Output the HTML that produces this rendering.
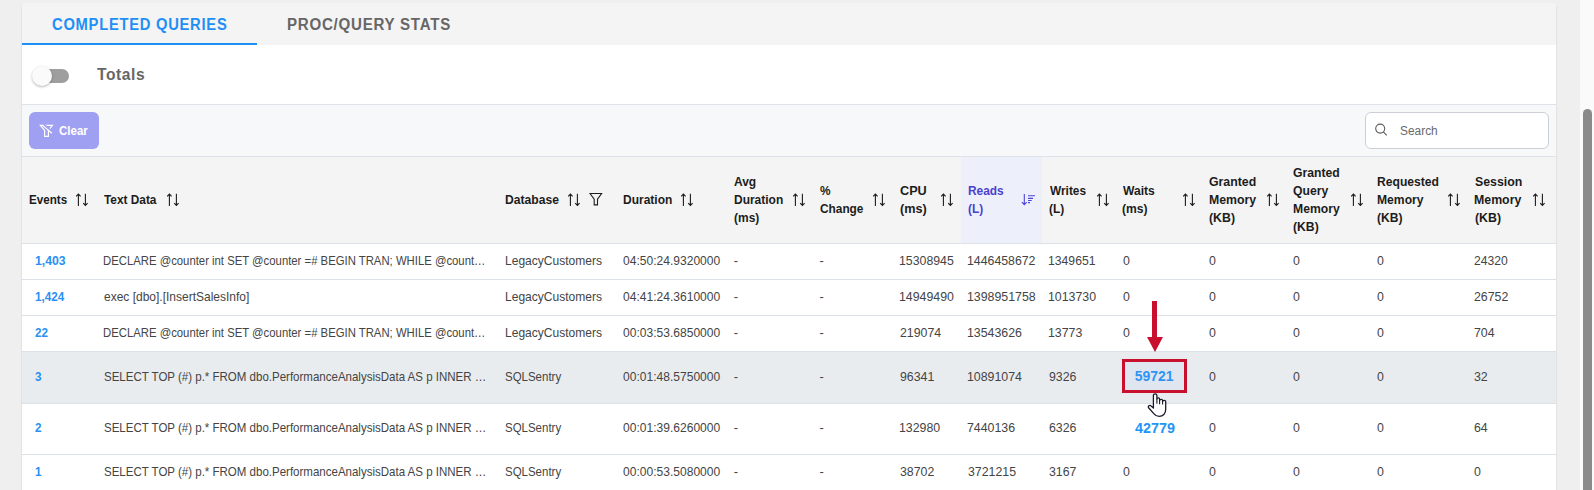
<!DOCTYPE html>
<html><head><meta charset="utf-8"><style>
*{margin:0;padding:0;box-sizing:border-box}
html,body{width:1594px;height:490px;overflow:hidden;background:#efefef;position:relative;font-family:'Liberation Sans',sans-serif}
.t{position:absolute;white-space:nowrap;line-height:20px;transform-origin:0 0}
.s{position:absolute}
.b{position:absolute}
.r{position:absolute;left:22px;width:1534px;border-top:1px solid #dde2e8}
</style></head><body>
<div class="b" style="left:21px;top:3px;width:1536px;height:500px;background:#e2e2e2;border-radius:5px 5px 0 0"></div>
<div class="b" style="left:22px;top:3px;width:1534px;height:500px;background:#ffffff;border-radius:4px 4px 0 0"></div>
<div class="b" style="left:22px;top:3px;width:1534px;height:42px;background:#f4f4f4;border-radius:4px 4px 0 0"></div>
<div class="b" style="left:22px;top:43px;width:235px;height:2px;background:#1e8ff5"></div>
<div class="b" style="left:33px;top:69px;width:36px;height:14px;border-radius:7px;background:#9e9e9e"></div>
<div class="b" style="left:32px;top:66px;width:20px;height:20px;border-radius:50%;background:#fafafa;box-shadow:0 1px 2.5px rgba(0,0,0,.3)"></div>
<div class="b" style="left:22px;top:104px;width:1534px;height:53px;background:#f7f8fa;border-top:1px solid #dfe2e8;border-bottom:1px solid #dfe2e8"></div>
<div class="b" style="left:29px;top:112px;width:70px;height:37px;border-radius:6px;background:#a0a0f2"></div>
<svg class="s" style="left:36px;top:120px" width="22" height="20" viewBox="0 0 22 20"><path d="M4.4 5.4H16.4L12.4 10.4V16.4H8.6V10.4Z" fill="none" stroke="#fff" stroke-width="1.2"/><path d="M7.5 4.3L16.8 12.2" stroke="#a0a0f2" stroke-width="1.8"/><path d="M6.6 5.4L15.9 13.3" stroke="#fff" stroke-width="1.2"/></svg>
<div class="b" style="left:1365px;top:112px;width:184px;height:37px;border-radius:6px;background:#fff;border:1px solid #ccd0d6"></div>
<svg class="s" style="left:1374px;top:123px" width="14" height="14" viewBox="0 0 14 14"><circle cx="6.2" cy="5.6" r="4.5" fill="none" stroke="#5c5c5c" stroke-width="1.1"/><path d="M9.4 8.8l3.3 3.6" stroke="#5c5c5c" stroke-width="1.1"/></svg>
<div class="b" style="left:22px;top:157px;width:1534px;height:86px;background:#f4f4f4"></div>
<div class="b" style="left:961px;top:157px;width:81px;height:86px;background:#edf0fb"></div>
<div class="r" style="top:243px;height:36px;background:#ffffff"></div>
<div class="r" style="top:279px;height:36px;background:#ffffff"></div>
<div class="r" style="top:315px;height:36px;background:#ffffff"></div>
<div class="r" style="top:351px;height:52px;background:#e9ecef"></div>
<div class="r" style="top:403px;height:51px;background:#ffffff"></div>
<div class="r" style="top:454px;height:36px;background:#ffffff"></div>
<div class="b" style="left:1122px;top:359px;width:65px;height:34px;border:3px solid #c8102e;background:#e0e6ef"></div>
<div class="b" style="left:1152px;top:301px;width:5px;height:37px;background:#c8102e"></div>
<svg class="s" style="left:1146.5px;top:337px" width="16" height="16" viewBox="0 0 16 16"><path d="M0 0H16L8 15Z" fill="#c8102e"/></svg>
<svg class="s" style="left:76.0px;top:192.5px" width="13" height="14" viewBox="0 0 13 14"><path d="M2.4 12.9V1.2M0.2 3.4L2.4 1.1L4.6 3.4M9.4 0.8V12.4M7.2 10.2L9.4 12.5L11.6 10.2" fill="none" stroke="#1c1c1c" stroke-width="1.1"/></svg>
<svg class="s" style="left:167.0px;top:192.5px" width="13" height="14" viewBox="0 0 13 14"><path d="M2.4 12.9V1.2M0.2 3.4L2.4 1.1L4.6 3.4M9.4 0.8V12.4M7.2 10.2L9.4 12.5L11.6 10.2" fill="none" stroke="#1c1c1c" stroke-width="1.1"/></svg>
<svg class="s" style="left:568.2px;top:192.5px" width="13" height="14" viewBox="0 0 13 14"><path d="M2.4 12.9V1.2M0.2 3.4L2.4 1.1L4.6 3.4M9.4 0.8V12.4M7.2 10.2L9.4 12.5L11.6 10.2" fill="none" stroke="#1c1c1c" stroke-width="1.1"/></svg>
<svg class="s" style="left:680.6px;top:192.5px" width="13" height="14" viewBox="0 0 13 14"><path d="M2.4 12.9V1.2M0.2 3.4L2.4 1.1L4.6 3.4M9.4 0.8V12.4M7.2 10.2L9.4 12.5L11.6 10.2" fill="none" stroke="#1c1c1c" stroke-width="1.1"/></svg>
<svg class="s" style="left:793.0px;top:192.5px" width="13" height="14" viewBox="0 0 13 14"><path d="M2.4 12.9V1.2M0.2 3.4L2.4 1.1L4.6 3.4M9.4 0.8V12.4M7.2 10.2L9.4 12.5L11.6 10.2" fill="none" stroke="#1c1c1c" stroke-width="1.1"/></svg>
<svg class="s" style="left:872.6px;top:192.5px" width="13" height="14" viewBox="0 0 13 14"><path d="M2.4 12.9V1.2M0.2 3.4L2.4 1.1L4.6 3.4M9.4 0.8V12.4M7.2 10.2L9.4 12.5L11.6 10.2" fill="none" stroke="#1c1c1c" stroke-width="1.1"/></svg>
<svg class="s" style="left:941.4px;top:192.5px" width="13" height="14" viewBox="0 0 13 14"><path d="M2.4 12.9V1.2M0.2 3.4L2.4 1.1L4.6 3.4M9.4 0.8V12.4M7.2 10.2L9.4 12.5L11.6 10.2" fill="none" stroke="#1c1c1c" stroke-width="1.1"/></svg>
<svg class="s" style="left:1096.5px;top:192.5px" width="13" height="14" viewBox="0 0 13 14"><path d="M2.4 12.9V1.2M0.2 3.4L2.4 1.1L4.6 3.4M9.4 0.8V12.4M7.2 10.2L9.4 12.5L11.6 10.2" fill="none" stroke="#1c1c1c" stroke-width="1.1"/></svg>
<svg class="s" style="left:1182.5px;top:192.5px" width="13" height="14" viewBox="0 0 13 14"><path d="M2.4 12.9V1.2M0.2 3.4L2.4 1.1L4.6 3.4M9.4 0.8V12.4M7.2 10.2L9.4 12.5L11.6 10.2" fill="none" stroke="#1c1c1c" stroke-width="1.1"/></svg>
<svg class="s" style="left:1266.6px;top:192.5px" width="13" height="14" viewBox="0 0 13 14"><path d="M2.4 12.9V1.2M0.2 3.4L2.4 1.1L4.6 3.4M9.4 0.8V12.4M7.2 10.2L9.4 12.5L11.6 10.2" fill="none" stroke="#1c1c1c" stroke-width="1.1"/></svg>
<svg class="s" style="left:1350.9px;top:192.5px" width="13" height="14" viewBox="0 0 13 14"><path d="M2.4 12.9V1.2M0.2 3.4L2.4 1.1L4.6 3.4M9.4 0.8V12.4M7.2 10.2L9.4 12.5L11.6 10.2" fill="none" stroke="#1c1c1c" stroke-width="1.1"/></svg>
<svg class="s" style="left:1448.4px;top:192.5px" width="13" height="14" viewBox="0 0 13 14"><path d="M2.4 12.9V1.2M0.2 3.4L2.4 1.1L4.6 3.4M9.4 0.8V12.4M7.2 10.2L9.4 12.5L11.6 10.2" fill="none" stroke="#1c1c1c" stroke-width="1.1"/></svg>
<svg class="s" style="left:1532.9px;top:192.5px" width="13" height="14" viewBox="0 0 13 14"><path d="M2.4 12.9V1.2M0.2 3.4L2.4 1.1L4.6 3.4M9.4 0.8V12.4M7.2 10.2L9.4 12.5L11.6 10.2" fill="none" stroke="#1c1c1c" stroke-width="1.1"/></svg>
<svg class="s" style="left:1016px;top:188px" width="26" height="24" viewBox="0 0 26 24"><path d="M8.3 5.9V16.5M5.9 14.2L8.3 16.7L10.7 14.2" fill="none" stroke="#4b44d8" stroke-width="1.1"/><path d="M12 7.8H19M12 10.4H17M12 12.5H15.7M12 14.6H14" stroke="#4b44d8" stroke-width="1.1"/></svg>
<svg class="s" style="left:589px;top:192px" width="14" height="14" viewBox="0 0 14 14"><path d="M1 1.5H12.6L8.5 7.2V12.9H5.2V7.2Z" fill="none" stroke="#1c1c1c" stroke-width="1.1"/></svg>
<div class="t" style="left:51.71px;top:14.90px;font:bold 16px/20px 'Liberation Sans';color:#1e8ff5;letter-spacing:0.8px;transform:scaleX(0.9210)">COMPLETED QUERIES</div>
<div class="t" style="left:286.66px;top:14.90px;font:bold 16px/20px 'Liberation Sans';color:#666666;letter-spacing:0.8px;transform:scaleX(0.9423)">PROC/QUERY STATS</div>
<div class="t" style="left:96.56px;top:65.20px;font:bold 16px/20px 'Liberation Sans';color:#666666;letter-spacing:0.6px;transform:scaleX(0.9750)">Totals</div>
<div class="t" style="left:58.86px;top:121.00px;font:bold 13px/20px 'Liberation Sans';color:#ffffff;letter-spacing:0px;transform:scaleX(0.8850)">Clear</div>
<div class="t" style="left:1400.32px;top:120.60px;font:12.5px/20px 'Liberation Sans';color:#6a6a6a;letter-spacing:0px;transform:scaleX(0.9516)">Search</div>
<div class="t" style="left:28.83px;top:189.90px;font:bold 13px/20px 'Liberation Sans';color:#1c1c1c;letter-spacing:0px;transform:scaleX(0.8945)">Events</div>
<div class="t" style="left:104.40px;top:189.90px;font:bold 13px/20px 'Liberation Sans';color:#1c1c1c;letter-spacing:0px;transform:scaleX(0.9108)">Text Data</div>
<div class="t" style="left:504.90px;top:189.90px;font:bold 13px/20px 'Liberation Sans';color:#1c1c1c;letter-spacing:0px;transform:scaleX(0.9327)">Database</div>
<div class="t" style="left:622.91px;top:189.90px;font:bold 13px/20px 'Liberation Sans';color:#1c1c1c;letter-spacing:0px;transform:scaleX(0.9231)">Duration</div>
<div class="t" style="left:734.07px;top:171.90px;font:bold 13px/20px 'Liberation Sans';color:#1c1c1c;letter-spacing:0px;transform:scaleX(0.9212)">Avg</div>
<div class="t" style="left:733.61px;top:189.90px;font:bold 13px/20px 'Liberation Sans';color:#1c1c1c;letter-spacing:0px;transform:scaleX(0.9212)">Duration</div>
<div class="t" style="left:733.84px;top:207.90px;font:bold 13px/20px 'Liberation Sans';color:#1c1c1c;letter-spacing:0px;transform:scaleX(0.9212)">(ms)</div>
<div class="t" style="left:819.77px;top:180.90px;font:bold 13px/20px 'Liberation Sans';color:#1c1c1c;letter-spacing:0px;transform:scaleX(0.9112)">%</div>
<div class="t" style="left:819.54px;top:198.90px;font:bold 13px/20px 'Liberation Sans';color:#1c1c1c;letter-spacing:0px;transform:scaleX(0.9112)">Change</div>
<div class="t" style="left:899.81px;top:180.90px;font:bold 13px/20px 'Liberation Sans';color:#1c1c1c;letter-spacing:0px;transform:scaleX(0.9752)">CPU</div>
<div class="t" style="left:899.81px;top:198.90px;font:bold 13px/20px 'Liberation Sans';color:#1c1c1c;letter-spacing:0px;transform:scaleX(0.9752)">(ms)</div>
<div class="t" style="left:967.81px;top:180.90px;font:bold 13px/20px 'Liberation Sans';color:#4b3fcf;letter-spacing:0px;transform:scaleX(0.9139)">Reads</div>
<div class="t" style="left:968.04px;top:198.90px;font:bold 13px/20px 'Liberation Sans';color:#4b3fcf;letter-spacing:0px;transform:scaleX(0.9139)">(L)</div>
<div class="t" style="left:1049.60px;top:180.90px;font:bold 13px/20px 'Liberation Sans';color:#1c1c1c;letter-spacing:0px;transform:scaleX(0.9128)">Writes</div>
<div class="t" style="left:1049.14px;top:198.90px;font:bold 13px/20px 'Liberation Sans';color:#1c1c1c;letter-spacing:0px;transform:scaleX(0.9128)">(L)</div>
<div class="t" style="left:1122.70px;top:180.90px;font:bold 13px/20px 'Liberation Sans';color:#1c1c1c;letter-spacing:0px;transform:scaleX(0.9304)">Waits</div>
<div class="t" style="left:1122.23px;top:198.90px;font:bold 13px/20px 'Liberation Sans';color:#1c1c1c;letter-spacing:0px;transform:scaleX(0.9304)">(ms)</div>
<div class="t" style="left:1208.83px;top:171.90px;font:bold 13px/20px 'Liberation Sans';color:#1c1c1c;letter-spacing:0px;transform:scaleX(0.9469)">Granted</div>
<div class="t" style="left:1208.59px;top:189.90px;font:bold 13px/20px 'Liberation Sans';color:#1c1c1c;letter-spacing:0px;transform:scaleX(0.9469)">Memory</div>
<div class="t" style="left:1208.83px;top:207.90px;font:bold 13px/20px 'Liberation Sans';color:#1c1c1c;letter-spacing:0px;transform:scaleX(0.9469)">(KB)</div>
<div class="t" style="left:1293.33px;top:162.90px;font:bold 13px/20px 'Liberation Sans';color:#1c1c1c;letter-spacing:0px;transform:scaleX(0.9367)">Granted</div>
<div class="t" style="left:1293.33px;top:180.90px;font:bold 13px/20px 'Liberation Sans';color:#1c1c1c;letter-spacing:0px;transform:scaleX(0.9367)">Query</div>
<div class="t" style="left:1293.10px;top:198.90px;font:bold 13px/20px 'Liberation Sans';color:#1c1c1c;letter-spacing:0px;transform:scaleX(0.9367)">Memory</div>
<div class="t" style="left:1293.33px;top:216.90px;font:bold 13px/20px 'Liberation Sans';color:#1c1c1c;letter-spacing:0px;transform:scaleX(0.9367)">(KB)</div>
<div class="t" style="left:1376.90px;top:171.90px;font:bold 13px/20px 'Liberation Sans';color:#1c1c1c;letter-spacing:0px;transform:scaleX(0.9328)">Requested</div>
<div class="t" style="left:1376.90px;top:189.90px;font:bold 13px/20px 'Liberation Sans';color:#1c1c1c;letter-spacing:0px;transform:scaleX(0.9328)">Memory</div>
<div class="t" style="left:1377.13px;top:207.90px;font:bold 13px/20px 'Liberation Sans';color:#1c1c1c;letter-spacing:0px;transform:scaleX(0.9328)">(KB)</div>
<div class="t" style="left:1474.53px;top:171.90px;font:bold 13px/20px 'Liberation Sans';color:#1c1c1c;letter-spacing:0px;transform:scaleX(0.9490)">Session</div>
<div class="t" style="left:1474.29px;top:189.90px;font:bold 13px/20px 'Liberation Sans';color:#1c1c1c;letter-spacing:0px;transform:scaleX(0.9490)">Memory</div>
<div class="t" style="left:1474.53px;top:207.90px;font:bold 13px/20px 'Liberation Sans';color:#1c1c1c;letter-spacing:0px;transform:scaleX(0.9490)">(KB)</div>
<div class="t" style="left:34.99px;top:251.00px;font:bold 13px/20px 'Liberation Sans';color:#2990f2;letter-spacing:0px;transform:scaleX(0.9408)">1,403</div>
<div class="t" style="left:103.43px;top:251.00px;font:13px/20px 'Liberation Sans';color:#444444;letter-spacing:0px;transform:scaleX(0.8711)">DECLARE @counter int SET @counter =# BEGIN TRAN; WHILE @count…</div>
<div class="t" style="left:504.67px;top:251.00px;font:13px/20px 'Liberation Sans';color:#444444;letter-spacing:0px;transform:scaleX(0.9259)">LegacyCustomers</div>
<div class="t" style="left:623.14px;top:251.00px;font:13px/20px 'Liberation Sans';color:#444444;letter-spacing:0px;transform:scaleX(0.9272)">04:50:24.9320000</div>
<div class="t" style="left:733.80px;top:251.00px;font:13px/20px 'Liberation Sans';color:#444444;letter-spacing:0px;transform:scaleX(1.0000)">-</div>
<div class="t" style="left:819.50px;top:251.00px;font:13px/20px 'Liberation Sans';color:#444444;letter-spacing:0px;transform:scaleX(1.0000)">-</div>
<div class="t" style="left:899.35px;top:251.00px;font:13px/20px 'Liberation Sans';color:#444444;letter-spacing:0px;transform:scaleX(0.9476)">15308945</div>
<div class="t" style="left:967.15px;top:251.00px;font:13px/20px 'Liberation Sans';color:#444444;letter-spacing:0px;transform:scaleX(0.9470)">1446458672</div>
<div class="t" style="left:1048.36px;top:251.00px;font:13px/20px 'Liberation Sans';color:#444444;letter-spacing:0px;transform:scaleX(0.9388)">1349651</div>
<div class="t" style="left:1122.53px;top:251.00px;font:13px/20px 'Liberation Sans';color:#444444;letter-spacing:0px;transform:scaleX(0.9500)">0</div>
<div class="t" style="left:1208.83px;top:251.00px;font:13px/20px 'Liberation Sans';color:#444444;letter-spacing:0px;transform:scaleX(0.9500)">0</div>
<div class="t" style="left:1292.73px;top:251.00px;font:13px/20px 'Liberation Sans';color:#444444;letter-spacing:0px;transform:scaleX(0.9500)">0</div>
<div class="t" style="left:1376.53px;top:251.00px;font:13px/20px 'Liberation Sans';color:#444444;letter-spacing:0px;transform:scaleX(0.9500)">0</div>
<div class="t" style="left:1474.43px;top:251.00px;font:13px/20px 'Liberation Sans';color:#444444;letter-spacing:0px;transform:scaleX(0.9333)">24320</div>
<div class="t" style="left:35.03px;top:287.00px;font:bold 13px/20px 'Liberation Sans';color:#2990f2;letter-spacing:0px;transform:scaleX(0.9000)">1,424</div>
<div class="t" style="left:103.54px;top:287.00px;font:13px/20px 'Liberation Sans';color:#444444;letter-spacing:0px;transform:scaleX(0.9222)">exec [dbo].[InsertSalesInfo]</div>
<div class="t" style="left:504.67px;top:287.00px;font:13px/20px 'Liberation Sans';color:#444444;letter-spacing:0px;transform:scaleX(0.9259)">LegacyCustomers</div>
<div class="t" style="left:623.14px;top:287.00px;font:13px/20px 'Liberation Sans';color:#444444;letter-spacing:0px;transform:scaleX(0.9272)">04:41:24.3610000</div>
<div class="t" style="left:733.80px;top:287.00px;font:13px/20px 'Liberation Sans';color:#444444;letter-spacing:0px;transform:scaleX(1.0000)">-</div>
<div class="t" style="left:819.50px;top:287.00px;font:13px/20px 'Liberation Sans';color:#444444;letter-spacing:0px;transform:scaleX(1.0000)">-</div>
<div class="t" style="left:899.35px;top:287.00px;font:13px/20px 'Liberation Sans';color:#444444;letter-spacing:0px;transform:scaleX(0.9500)">14949490</div>
<div class="t" style="left:967.15px;top:287.00px;font:13px/20px 'Liberation Sans';color:#444444;letter-spacing:0px;transform:scaleX(0.9500)">1398951758</div>
<div class="t" style="left:1048.35px;top:287.00px;font:13px/20px 'Liberation Sans';color:#444444;letter-spacing:0px;transform:scaleX(0.9500)">1013730</div>
<div class="t" style="left:1122.53px;top:287.00px;font:13px/20px 'Liberation Sans';color:#444444;letter-spacing:0px;transform:scaleX(0.9500)">0</div>
<div class="t" style="left:1208.83px;top:287.00px;font:13px/20px 'Liberation Sans';color:#444444;letter-spacing:0px;transform:scaleX(0.9500)">0</div>
<div class="t" style="left:1292.73px;top:287.00px;font:13px/20px 'Liberation Sans';color:#444444;letter-spacing:0px;transform:scaleX(0.9500)">0</div>
<div class="t" style="left:1376.53px;top:287.00px;font:13px/20px 'Liberation Sans';color:#444444;letter-spacing:0px;transform:scaleX(0.9500)">0</div>
<div class="t" style="left:1474.43px;top:287.00px;font:13px/20px 'Liberation Sans';color:#444444;letter-spacing:0px;transform:scaleX(0.9500)">26752</div>
<div class="t" style="left:35.25px;top:323.00px;font:bold 13px/20px 'Liberation Sans';color:#2990f2;letter-spacing:0px;transform:scaleX(0.9000)">22</div>
<div class="t" style="left:103.43px;top:323.00px;font:13px/20px 'Liberation Sans';color:#444444;letter-spacing:0px;transform:scaleX(0.8711)">DECLARE @counter int SET @counter =# BEGIN TRAN; WHILE @count…</div>
<div class="t" style="left:504.67px;top:323.00px;font:13px/20px 'Liberation Sans';color:#444444;letter-spacing:0px;transform:scaleX(0.9259)">LegacyCustomers</div>
<div class="t" style="left:623.14px;top:323.00px;font:13px/20px 'Liberation Sans';color:#444444;letter-spacing:0px;transform:scaleX(0.9272)">00:03:53.6850000</div>
<div class="t" style="left:733.80px;top:323.00px;font:13px/20px 'Liberation Sans';color:#444444;letter-spacing:0px;transform:scaleX(1.0000)">-</div>
<div class="t" style="left:819.50px;top:323.00px;font:13px/20px 'Liberation Sans';color:#444444;letter-spacing:0px;transform:scaleX(1.0000)">-</div>
<div class="t" style="left:899.82px;top:323.00px;font:13px/20px 'Liberation Sans';color:#444444;letter-spacing:0px;transform:scaleX(0.9500)">219074</div>
<div class="t" style="left:967.15px;top:323.00px;font:13px/20px 'Liberation Sans';color:#444444;letter-spacing:0px;transform:scaleX(0.9500)">13543626</div>
<div class="t" style="left:1048.35px;top:323.00px;font:13px/20px 'Liberation Sans';color:#444444;letter-spacing:0px;transform:scaleX(0.9500)">13773</div>
<div class="t" style="left:1122.53px;top:323.00px;font:13px/20px 'Liberation Sans';color:#444444;letter-spacing:0px;transform:scaleX(0.9500)">0</div>
<div class="t" style="left:1208.83px;top:323.00px;font:13px/20px 'Liberation Sans';color:#444444;letter-spacing:0px;transform:scaleX(0.9500)">0</div>
<div class="t" style="left:1292.73px;top:323.00px;font:13px/20px 'Liberation Sans';color:#444444;letter-spacing:0px;transform:scaleX(0.9500)">0</div>
<div class="t" style="left:1376.53px;top:323.00px;font:13px/20px 'Liberation Sans';color:#444444;letter-spacing:0px;transform:scaleX(0.9500)">0</div>
<div class="t" style="left:1474.19px;top:323.00px;font:13px/20px 'Liberation Sans';color:#444444;letter-spacing:0px;transform:scaleX(0.9500)">704</div>
<div class="t" style="left:35.48px;top:367.00px;font:bold 13px/20px 'Liberation Sans';color:#2990f2;letter-spacing:0px;transform:scaleX(0.9000)">3</div>
<div class="t" style="left:103.64px;top:367.00px;font:13px/20px 'Liberation Sans';color:#444444;letter-spacing:0px;transform:scaleX(0.8853)">SELECT TOP (#) p.* FROM dbo.PerformanceAnalysisData AS p INNER …</div>
<div class="t" style="left:504.94px;top:367.00px;font:13px/20px 'Liberation Sans';color:#444444;letter-spacing:0px;transform:scaleX(0.8829)">SQLSentry</div>
<div class="t" style="left:623.14px;top:367.00px;font:13px/20px 'Liberation Sans';color:#444444;letter-spacing:0px;transform:scaleX(0.9272)">00:01:48.5750000</div>
<div class="t" style="left:733.80px;top:367.00px;font:13px/20px 'Liberation Sans';color:#444444;letter-spacing:0px;transform:scaleX(1.0000)">-</div>
<div class="t" style="left:819.50px;top:367.00px;font:13px/20px 'Liberation Sans';color:#444444;letter-spacing:0px;transform:scaleX(1.0000)">-</div>
<div class="t" style="left:899.82px;top:367.00px;font:13px/20px 'Liberation Sans';color:#444444;letter-spacing:0px;transform:scaleX(0.9500)">96341</div>
<div class="t" style="left:967.15px;top:367.00px;font:13px/20px 'Liberation Sans';color:#444444;letter-spacing:0px;transform:scaleX(0.9500)">10891074</div>
<div class="t" style="left:1048.83px;top:367.00px;font:13px/20px 'Liberation Sans';color:#444444;letter-spacing:0px;transform:scaleX(0.9500)">9326</div>
<div class="t" style="left:1208.83px;top:367.00px;font:13px/20px 'Liberation Sans';color:#444444;letter-spacing:0px;transform:scaleX(0.9500)">0</div>
<div class="t" style="left:1292.73px;top:367.00px;font:13px/20px 'Liberation Sans';color:#444444;letter-spacing:0px;transform:scaleX(0.9500)">0</div>
<div class="t" style="left:1376.53px;top:367.00px;font:13px/20px 'Liberation Sans';color:#444444;letter-spacing:0px;transform:scaleX(0.9500)">0</div>
<div class="t" style="left:1474.43px;top:367.00px;font:13px/20px 'Liberation Sans';color:#444444;letter-spacing:0px;transform:scaleX(0.9500)">32</div>
<div class="t" style="left:35.25px;top:418.00px;font:bold 13px/20px 'Liberation Sans';color:#2990f2;letter-spacing:0px;transform:scaleX(0.9000)">2</div>
<div class="t" style="left:103.64px;top:418.00px;font:13px/20px 'Liberation Sans';color:#444444;letter-spacing:0px;transform:scaleX(0.8853)">SELECT TOP (#) p.* FROM dbo.PerformanceAnalysisData AS p INNER …</div>
<div class="t" style="left:504.94px;top:418.00px;font:13px/20px 'Liberation Sans';color:#444444;letter-spacing:0px;transform:scaleX(0.8829)">SQLSentry</div>
<div class="t" style="left:623.14px;top:418.00px;font:13px/20px 'Liberation Sans';color:#444444;letter-spacing:0px;transform:scaleX(0.9272)">00:01:39.6260000</div>
<div class="t" style="left:733.80px;top:418.00px;font:13px/20px 'Liberation Sans';color:#444444;letter-spacing:0px;transform:scaleX(1.0000)">-</div>
<div class="t" style="left:819.50px;top:418.00px;font:13px/20px 'Liberation Sans';color:#444444;letter-spacing:0px;transform:scaleX(1.0000)">-</div>
<div class="t" style="left:899.35px;top:418.00px;font:13px/20px 'Liberation Sans';color:#444444;letter-spacing:0px;transform:scaleX(0.9500)">132980</div>
<div class="t" style="left:967.39px;top:418.00px;font:13px/20px 'Liberation Sans';color:#444444;letter-spacing:0px;transform:scaleX(0.9500)">7440136</div>
<div class="t" style="left:1048.59px;top:418.00px;font:13px/20px 'Liberation Sans';color:#444444;letter-spacing:0px;transform:scaleX(0.9500)">6326</div>
<div class="t" style="left:1208.83px;top:418.00px;font:13px/20px 'Liberation Sans';color:#444444;letter-spacing:0px;transform:scaleX(0.9500)">0</div>
<div class="t" style="left:1292.73px;top:418.00px;font:13px/20px 'Liberation Sans';color:#444444;letter-spacing:0px;transform:scaleX(0.9500)">0</div>
<div class="t" style="left:1376.53px;top:418.00px;font:13px/20px 'Liberation Sans';color:#444444;letter-spacing:0px;transform:scaleX(0.9500)">0</div>
<div class="t" style="left:1474.19px;top:418.00px;font:13px/20px 'Liberation Sans';color:#444444;letter-spacing:0px;transform:scaleX(0.9500)">64</div>
<div class="t" style="left:35.03px;top:462.00px;font:bold 13px/20px 'Liberation Sans';color:#2990f2;letter-spacing:0px;transform:scaleX(0.9000)">1</div>
<div class="t" style="left:103.64px;top:462.00px;font:13px/20px 'Liberation Sans';color:#444444;letter-spacing:0px;transform:scaleX(0.8853)">SELECT TOP (#) p.* FROM dbo.PerformanceAnalysisData AS p INNER …</div>
<div class="t" style="left:504.94px;top:462.00px;font:13px/20px 'Liberation Sans';color:#444444;letter-spacing:0px;transform:scaleX(0.8829)">SQLSentry</div>
<div class="t" style="left:623.14px;top:462.00px;font:13px/20px 'Liberation Sans';color:#444444;letter-spacing:0px;transform:scaleX(0.9272)">00:00:53.5080000</div>
<div class="t" style="left:733.80px;top:462.00px;font:13px/20px 'Liberation Sans';color:#444444;letter-spacing:0px;transform:scaleX(1.0000)">-</div>
<div class="t" style="left:819.50px;top:462.00px;font:13px/20px 'Liberation Sans';color:#444444;letter-spacing:0px;transform:scaleX(1.0000)">-</div>
<div class="t" style="left:899.82px;top:462.00px;font:13px/20px 'Liberation Sans';color:#444444;letter-spacing:0px;transform:scaleX(0.9500)">38702</div>
<div class="t" style="left:967.62px;top:462.00px;font:13px/20px 'Liberation Sans';color:#444444;letter-spacing:0px;transform:scaleX(0.9500)">3721215</div>
<div class="t" style="left:1048.83px;top:462.00px;font:13px/20px 'Liberation Sans';color:#444444;letter-spacing:0px;transform:scaleX(0.9500)">3167</div>
<div class="t" style="left:1122.53px;top:462.00px;font:13px/20px 'Liberation Sans';color:#444444;letter-spacing:0px;transform:scaleX(0.9500)">0</div>
<div class="t" style="left:1208.83px;top:462.00px;font:13px/20px 'Liberation Sans';color:#444444;letter-spacing:0px;transform:scaleX(0.9500)">0</div>
<div class="t" style="left:1292.73px;top:462.00px;font:13px/20px 'Liberation Sans';color:#444444;letter-spacing:0px;transform:scaleX(0.9500)">0</div>
<div class="t" style="left:1376.53px;top:462.00px;font:13px/20px 'Liberation Sans';color:#444444;letter-spacing:0px;transform:scaleX(0.9500)">0</div>
<div class="t" style="left:1474.43px;top:462.00px;font:13px/20px 'Liberation Sans';color:#444444;letter-spacing:0px;transform:scaleX(0.9500)">0</div>
<div class="t" style="left:1134.70px;top:365.70px;font:bold 14px/20px 'Liberation Sans';color:#2e95f5;letter-spacing:0px;transform:scaleX(1.0000)">59721</div>
<div class="t" style="left:1134.74px;top:418.00px;font:bold 14px/20px 'Liberation Sans';color:#2195f8;letter-spacing:0px;transform:scaleX(1.0248)">42779</div>
<svg class="s" style="left:1147px;top:392px" width="20" height="26" viewBox="0 0 20 26"><path d="M6.4 16V3.6C6.4 2.6 7.2 1.8 8.15 1.8S9.9 2.6 9.9 3.6V7.2C9.9 6.4 10.5 5.9 11.25 5.9S12.6 6.4 12.6 7.2V8.5C12.6 7.8 13.3 7.3 14.1 7.3S15.6 7.8 15.6 8.5V9.6C15.6 8.9 16.3 8.4 17.15 8.4S18.7 8.9 18.7 9.6V17.5C18.7 21.5 16 24.4 12.3 24.4C9.8 24.4 8.2 23.4 6.8 21.6L1.6 15.8C1.1 15.1 1.2 14.2 1.9 13.7C2.6 13.2 3.5 13.3 4.1 13.9Z" fill="#fff" stroke="#1a1a2a" stroke-width="1.3" stroke-linejoin="round"/><path d="M9.9 7.2V11.8M12.6 8.5V12.2M15.6 9.6V12.5" stroke="#1a1a2a" stroke-width="1.1"/></svg>
<div class="b" style="left:1580px;top:0;width:14px;height:490px;background:#fafafa"></div>
<div class="b" style="left:1583px;top:108.5px;width:9px;height:400px;border-radius:4.5px;background:#8a8a8a"></div>
</body></html>
